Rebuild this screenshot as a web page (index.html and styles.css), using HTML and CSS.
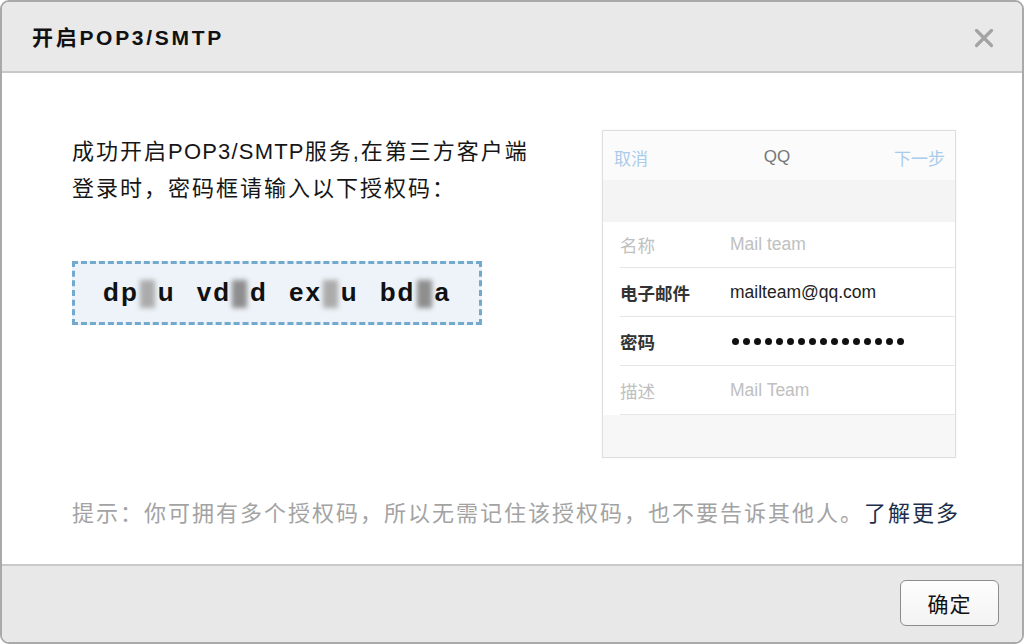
FILE: index.html
```html
<!DOCTYPE html>
<html lang="zh-CN">
<head>
<meta charset="utf-8">
<title>开启POP3/SMTP</title>
<link rel="stylesheet" href="styles.css">
</head>
<body>
<div class="dialog">
  <div class="dlg-head">
    <h1 class="dlg-title">开启POP3/SMTP</h1>
    <button class="dlg-close" aria-label="关闭">
      <svg viewBox="0 0 20 20" width="20" height="20"><path d="M2.5 2.5 L17.5 17.5 M17.5 2.5 L2.5 17.5" stroke="#a3a3a3" stroke-width="3.2" stroke-linecap="round" fill="none"/></svg>
    </button>
  </div>
  <div class="dlg-body">
    <div class="main-row">
      <div class="left-col">
        <p class="intro">成功开启<span class="latin">POP3/SMTP</span>服务,在第三方客户端<br>登录时，密码框请输入以下授权码：</p>
        <div class="code-box">
          <span class="code">dp<span class="mask"></span>u</span>
          <span class="code">vd<span class="mask dark"></span>d</span>
          <span class="code">ex<span class="mask"></span>u</span>
          <span class="code">bd<span class="mask dark"></span>a</span>
        </div>
      </div>
      <div class="phone">
        <div class="ph-bar">
          <span class="ph-link">取消</span>
          <span class="ph-title">QQ</span>
          <span class="ph-link">下一步</span>
        </div>
        <div class="ph-gap"></div>
        <div class="ph-rows">
          <div class="ph-row light"><span class="ph-label">名称</span><span class="ph-val">Mail team</span></div>
          <div class="ph-row dark"><span class="ph-label">电子邮件</span><span class="ph-val">mailteam@qq.com</span></div>
          <div class="ph-row dark"><span class="ph-label">密码</span><span class="ph-dots"><i></i><i></i><i></i><i></i><i></i><i></i><i></i><i></i><i></i><i></i><i></i><i></i><i></i><i></i><i></i><i></i></span></div>
          <div class="ph-row light"><span class="ph-label">描述</span><span class="ph-val">Mail Team</span></div>
        </div>
        <div class="ph-foot"></div>
      </div>
    </div>
    <p class="tip">提示：你可拥有多个授权码，所以无需记住该授权码，也不要告诉其他人。<a class="tip-link" href="#">了解更多</a></p>
  </div>
  <div class="dlg-foot">
    <button class="btn-ok">确定</button>
  </div>
</div>
</body>
</html>
```
FILE: styles.css
```css
* { box-sizing: border-box; }
html, body { margin: 0; padding: 0; background: #ffffff; }
body {
  font-family: "Liberation Sans", "Noto Sans CJK SC", sans-serif;
  width: 1024px;
  height: 644px;
  overflow: hidden;
}
.dialog {
  width: 1024px;
  height: 644px;
  border: 2px solid #a9a9a9;
  border-radius: 9px;
  overflow: hidden;
  display: flex;
  flex-direction: column;
  background: #fff;
}
.dlg-head {
  height: 71px;
  flex: none;
  background: #e9e9e9;
  border-bottom: 2px solid #c9c9c9;
  display: flex;
  align-items: center;
  justify-content: space-between;
  padding: 0 28px 0 30px;
}
.dlg-title {
  margin: 0;
  font-size: 21px;
  font-weight: bold;
  letter-spacing: 2.7px;
  color: #111;
  line-height: 1;
  padding-top: 2px;
}
.dlg-close {
  border: 0;
  background: transparent;
  padding: 0;
  width: 20px;
  height: 20px;
  display: flex;
  margin-top: 2px;
}
.dlg-body {
  flex: 1;
  padding: 57px 66px 0 70px;
  display: flex;
  flex-direction: column;
}
.main-row {
  display: flex;
  justify-content: space-between;
  align-items: flex-start;
}
.left-col {
  width: 412px;
  padding-top: 3px;
}
.intro {
  margin: 0;
  font-size: 22px;
  line-height: 37px;
  letter-spacing: 2px;
  color: #161616;
  white-space: nowrap;
}
.intro .latin { letter-spacing: 1.2px; }
.code-box {
  margin-top: 54px;
  width: 410px;
  height: 64px;
  border: 3px dashed #72a9cd;
  background: #edf3f8;
  display: flex;
  align-items: center;
  justify-content: center;
  gap: 21px;
  padding-bottom: 2px;
}
.code {
  font-size: 26px;
  font-weight: bold;
  letter-spacing: 2px;
  color: #111;
  display: inline-flex;
  align-items: center;
}
.mask {
  display: inline-block;
  width: 15px;
  height: 28px;
  margin: 3px 3px 0 1px;
  background: #ababab;
  filter: blur(2.5px);
}
.mask.dark { background: #8e8e8e; }
.phone {
  width: 354px;
  height: 328px;
  border: 1px solid #dedede;
  box-shadow: 0 0 2px rgba(0,0,0,0.06);
  background: #fff;
  display: flex;
  flex-direction: column;
}
.ph-bar {
  height: 49px;
  background: #fbfbfb;
  display: flex;
  align-items: center;
  justify-content: space-between;
  padding: 3px 10px 0 11px;
  font-size: 17px;
}
.ph-link { color: #a9cbec; }
.ph-title { color: #777; margin-left: 12px; }
.ph-gap {
  height: 42px;
  background: #f4f4f4;
}
.ph-rows {
  background: #fff;
  padding-left: 17px;
}
.ph-row {
  height: 49px;
  display: flex;
  align-items: center;
  border-bottom: 1px solid #e6e6e6;
  font-size: 17.5px;
}
.ph-row:first-child { height: 46px; }
.ph-label { width: 110px; flex: none; }
.ph-row.light { color: #c0c0c0; }
.ph-row.dark { color: #222; }
.ph-row.dark .ph-label { font-weight: bold; color: #333; }
.ph-dots {
  display: flex;
  gap: 4px;
  margin-left: 2px;
}
.ph-dots i {
  display: block;
  width: 7px;
  height: 7px;
  border-radius: 50%;
  background: #111;
}
.ph-foot {
  flex: 1;
  background: #f7f7f7;
}
.tip {
  margin: 37px 0 0 0;
  font-size: 22px;
  line-height: 37px;
  letter-spacing: 2px;
  color: #a3a3a3;
  white-space: nowrap;
}
.tip-link {
  color: #1c2e4c;
  text-decoration: none;
}
.dlg-foot {
  height: 78px;
  flex: none;
  background: #e8e8e8;
  border-top: 2px solid #c9c9c9;
  display: flex;
  justify-content: flex-end;
  align-items: flex-start;
  padding: 14px 23px 0 0;
}
.btn-ok {
  width: 99px;
  height: 46px;
  border: 1.5px solid #8c8c8c;
  border-radius: 6px;
  background: linear-gradient(#fdfdfd, #f3f3f3);
  font-family: "Noto Sans CJK SC", sans-serif;
  font-size: 21px;
  letter-spacing: 1px;
  color: #111;
  padding: 0;
}
```
